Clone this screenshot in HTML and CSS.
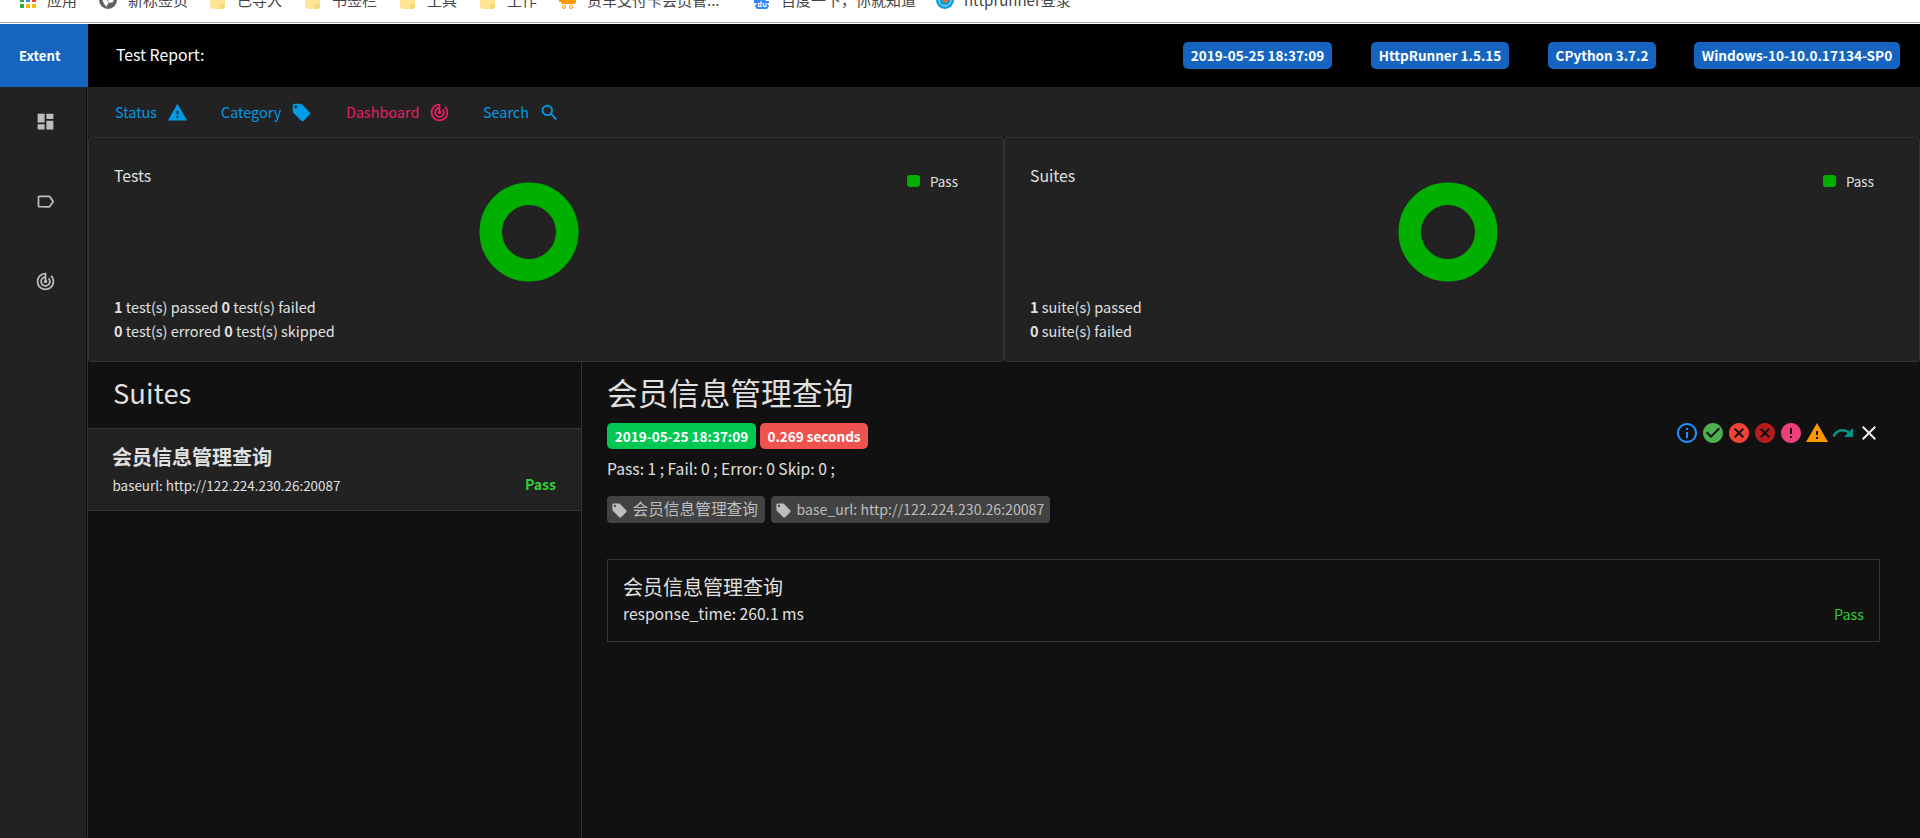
FILE: index.html
```
<!DOCTYPE html>
<html lang="zh-CN">
<head>
<meta charset="utf-8">
<title>Test Report</title>
<link rel="stylesheet" href="styles.css">
</head>
<body>
<svg class="defs" width="0" height="0">
  <symbol id="warning" viewBox="0 0 24 24"><path d="M1 21h22L12 2 1 21zm12-3h-2v-2h2v2zm0-4h-2v-4h2v4z"/></symbol>
  <symbol id="tag" viewBox="0 0 24 24"><path d="M21.41 11.58l-9-9C12.05 2.22 11.55 2 11 2H4c-1.1 0-2 .9-2 2v7c0 .55.22 1.05.59 1.42l9 9c.36.36.86.58 1.41.58.55 0 1.05-.22 1.41-.59l7-7c.37-.36.59-.86.59-1.41 0-.55-.23-1.06-.59-1.42zM5.500 7C4.670 7 4 6.330 4 5.500S4.670 4 5.500 4 7 4.670 7 5.500 6.330 7 5.500 7z"/></symbol>
  <symbol id="track" viewBox="0 0 24 24"><path d="M19.070 4.930l-1.410 1.410C19.100 7.790 20 9.790 20 12c0 4.420-3.580 8-8 8s-8-3.580-8-8c0-4.080 3.050-7.440 7-7.930v2.020C8.160 6.570 6 9.030 6 12c0 3.310 2.690 6 6 6s6-2.690 6-6c0-1.660-.67-3.160-1.760-4.240l-1.410 1.410C15.550 9.900 16 10.900 16 12c0 2.210-1.790 4-4 4s-4-1.790-4-4c0-1.860 1.280-3.410 3-3.860v2.140c-.6.35-1 .98-1 1.720 0 1.100.9 2 2 2s2-.9 2-2c0-.74-.4-1.380-1-1.720V2h-1C6.480 2 2 6.480 2 12s4.480 10 10 10 10-4.480 10-10c0-2.760-1.120-5.260-2.930-7.070z"/></symbol>
  <symbol id="search" viewBox="0 0 24 24"><path d="M15.500 14h-.79l-.28-.27C15.410 12.590 16 11.110 16 9.500 16 5.910 13.090 3 9.500 3S3 5.910 3 9.500 5.910 16 9.500 16c1.610 0 3.090-.59 4.230-1.570l.27.28v.79l5 4.990L20.490 19l-4.990-5zm-6 0C7.010 14 5 11.990 5 9.500S7.010 5 9.500 5 14 7.010 14 9.500 11.990 14 9.500 14z"/></symbol>
  <symbol id="dashboard" viewBox="0 0 24 24"><path d="M3 13h8V3H3v10zm0 8h8v-6H3v6zm10 0h8V11h-8v10zm0-18v6h8V3h-8z"/></symbol>
  <symbol id="label" viewBox="0 0 24 24"><path d="M17.630 5.840C17.270 5.330 16.670 5 16 5L5 5.010C3.900 5.010 3 5.900 3 7v10c0 1.100.9 1.990 2 1.990L16 19c.67 0 1.270-.33 1.630-.84L22 12l-4.370-6.160zM16 17H5V7h11l3.550 5L16 17z"/></symbol>
  <symbol id="info" viewBox="0 0 24 24"><path d="M11 17h2v-6h-2v6zm1-15C6.480 2 2 6.480 2 12s4.480 10 10 10 10-4.480 10-10S17.520 2 12 2zm0 18c-4.410 0-8-3.590-8-8s3.590-8 8-8 8 3.590 8 8-3.590 8-8 8zM11 9h2V7h-2v2z"/></symbol>
  <symbol id="check" viewBox="0 0 24 24"><path d="M12 2C6.480 2 2 6.480 2 12s4.480 10 10 10 10-4.480 10-10S17.520 2 12 2zm-2 15l-5-5 1.410-1.410L10 14.170l7.590-7.590L19 8l-9 9z"/></symbol>
  <symbol id="cancel" viewBox="0 0 24 24"><path d="M12 2C6.470 2 2 6.470 2 12s4.470 10 10 10 10-4.470 10-10S17.530 2 12 2zm5 13.590L15.590 17 12 13.410 8.410 17 7 15.590 10.590 12 7 8.410 8.410 7 12 10.590 15.590 7 17 8.410 13.410 12 17 15.590z"/></symbol>
  <symbol id="error" viewBox="0 0 24 24"><path d="M12 2C6.480 2 2 6.480 2 12s4.480 10 10 10 10-4.480 10-10S17.520 2 12 2zm1 15h-2v-2h2v2zm0-4h-2V7h2v6z"/></symbol>
  <symbol id="redo" viewBox="0 0 24 24"><path d="M18.400 10.600C16.550 8.990 14.150 8 11.500 8c-4.650 0-8.580 3.030-9.960 7.220L3.900 16c1.050-3.190 4.050-5.500 7.600-5.500 1.950 0 3.730.72 5.120 1.880L13 16h9V7l-3.600 3.600z"/></symbol>
  <symbol id="close" viewBox="0 0 24 24"><path d="M19 6.410L17.590 5 12 10.590 6.410 5 5 6.410 10.590 12 5 17.590 6.410 19 12 13.410 17.590 19 19 17.590 13.410 12z"/></symbol>
  <symbol id="folder" viewBox="0 0 18 10"><path d="M1 0h15v6l-1 3H3L1 7z" fill="#ffe694"/><path d="M11 4h5v3l-2 2h-3z" fill="#f8d775"/></symbol>
</svg>

<div class="bookmarks">
  <span class="bm bm-apps"><svg class="bm-icon" viewBox="0 0 18 18"><path fill="#2da94f" d="M1 0h4v2H1zM1 4h4v4H1z"/><path fill="#4285f4" d="M7 0h4v2H7z"/><path fill="#ea4335" d="M13 0h4v2h-4z"/><path fill="#fbbc05" d="M7 4h4v4H7zM13 4h4v4h-4z"/></svg>应用</span>
  <span class="bm bm-new"><svg class="bm-icon" viewBox="0 0 18 18"><circle cx="9" cy="0" r="9" fill="#5f6368"/><path d="M3-1l5 1 2 3-2 2v2L5 4zM10-2h5l-1 4-3 1-2-2z" fill="#fff"/></svg>新标签页</span>
  <span class="bm"><svg class="bm-icon bm-folder"><use href="#folder"/></svg>已导入</span>
  <span class="bm"><svg class="bm-icon bm-folder"><use href="#folder"/></svg>书签栏</span>
  <span class="bm"><svg class="bm-icon bm-folder"><use href="#folder"/></svg>工具</span>
  <span class="bm"><svg class="bm-icon bm-folder"><use href="#folder"/></svg>工作</span>
  <span class="bm"><svg class="bm-icon" viewBox="0 0 18 18"><path d="M0 0h17v3l-2 1H3L2 2H0z" fill="#f90"/><circle cx="5" cy="7" r="1.500" fill="none" stroke="#f90"/><circle cx="12" cy="7" r="1.500" fill="none" stroke="#f90"/></svg>货车支付卡会员管...</span>
  <span class="bm"><svg class="bm-icon" viewBox="0 0 18 18"><path d="M1 0h4l2-1h4l2 2h3v2h-2l2 3-2 3H4L2 6l2-3H1z" fill="#3385ff"/><path d="M8 1v5.500H5.500v-3H8M10.500 3v3.500H13V3" fill="none" stroke="#fff" stroke-width="1.200"/></svg>百度一下，你就知道</span>
  <span class="bm"><svg class="bm-icon" viewBox="0 0 18 18"><circle cx="9" cy="0" r="9" fill="#0d9ddb"/><circle cx="9" cy="0" r="6" fill="none" stroke="#bfe8f7"/><circle cx="9" cy="0" r="2.500" fill="#f26b21"/></svg>httprunner登录</span>
</div>

<div class="app">
  <header class="topbar">
    <div class="logo">Extent</div>
    <div class="report-name">Test Report:</div>
    <div class="env">
      <span class="badge env-date">2019-05-25 18:37:09</span>
      <span class="badge env-runner">HttpRunner 1.5.15</span>
      <span class="badge env-python">CPython 3.7.2</span>
      <span class="badge env-os">Windows-10-10.0.17134-SP0</span>
    </div>
  </header>
  <div class="body">
    <aside class="sidebar">
      <svg class="side-icon"><use href="#dashboard"/></svg>
      <svg class="side-icon"><use href="#label"/></svg>
      <svg class="side-icon"><use href="#track"/></svg>
    </aside>
    <main class="content">
      <nav class="filters">
        <a class="filter f-status"><span>Status</span><svg class="nav-icon"><use href="#warning"/></svg></a>
        <a class="filter f-category"><span>Category</span><svg class="nav-icon"><use href="#tag"/></svg></a>
        <a class="filter f-dashboard active"><span>Dashboard</span><svg class="nav-icon"><use href="#track"/></svg></a>
        <a class="filter f-search"><span>Search</span><svg class="nav-icon"><use href="#search"/></svg></a>
      </nav>
      <section class="charts">
        <div class="chart-card">
          <div class="chart-title">Tests</div>
          <svg class="donut donut-tests" viewBox="0 0 100 100"><circle cx="50" cy="50" r="38.250"/></svg>
          <div class="legend"><i></i>Pass</div>
          <div class="counts"><div><b>1</b> test(s) passed <b>0</b> test(s) failed</div><div><b>0</b> test(s) errored <b>0</b> test(s) skipped</div></div>
        </div>
        <div class="chart-card">
          <div class="chart-title">Suites</div>
          <svg class="donut donut-suites" viewBox="0 0 100 100"><circle cx="50" cy="50" r="38.250"/></svg>
          <div class="legend"><i></i>Pass</div>
          <div class="counts"><div><b>1</b> suite(s) passed</div><div><b>0</b> suite(s) failed</div></div>
        </div>
      </section>
      <section class="panes">
        <div class="suite-list">
          <h5 class="list-title">Suites</h5>
          <div class="suite">
            <div class="suite-name">会员信息管理查询</div>
            <div class="suite-row"><span class="suite-url">baseurl: http://122.224.230.26:20087</span><span class="suite-pass">Pass</span></div>
          </div>
        </div>
        <div class="detail">
          <h5 class="detail-title">会员信息管理查询</h5>
          <div class="detail-meta">
            <div class="badges"><span class="badge green">2019-05-25 18:37:09</span><span class="badge red">0.269 seconds</span></div>
            <div class="status-icons">
              <svg class="c-info"><use href="#info"/></svg>
              <svg class="c-pass"><use href="#check"/></svg>
              <svg class="c-fail"><use href="#cancel"/></svg>
              <svg class="c-fatal"><use href="#cancel"/></svg>
              <svg class="c-error"><use href="#error"/></svg>
              <svg class="c-warn"><use href="#warning"/></svg>
              <svg class="c-skip"><use href="#redo"/></svg>
              <svg class="c-clear"><use href="#close"/></svg>
            </div>
          </div>
          <div class="summary">Pass: 1 ; Fail: 0 ; Error: 0 Skip: 0 ;</div>
          <div class="tags">
            <span class="tag tag-name"><svg><use href="#tag"/></svg><span>会员信息管理查询</span></span>
            <span class="tag tag-url"><svg><use href="#tag"/></svg><span>base_url: http://122.224.230.26:20087</span></span>
          </div>
          <div class="test">
            <div class="test-name">会员信息管理查询</div>
            <div class="test-row"><span class="test-time">response_time: 260.1 ms</span><span class="test-pass">Pass</span></div>
          </div>
        </div>
      </section>
    </main>
  </div>
</div>
</body>
</html>
```
FILE: styles.css
```
* { box-sizing: border-box; }
body {
  margin: 0;
  height: 838px;
  overflow: hidden;
  background: #111;
  color: #e0e0e0;
  font-family: "Noto Sans CJK SC", "Noto Sans", sans-serif;
  font-size: 14.4px;
  white-space: nowrap;
}
svg { display: block; flex: none; fill: currentColor; }
.defs { position: absolute; }
h5 { margin: 0; font-weight: 400; }

/* browser bookmark strip */
.bookmarks {
  display: grid;
  grid-template-columns: 91px 99px 95px 95px 80px 80px 194px 183px 200px;
  height: 24px;
  padding-left: 19px;
  overflow: hidden;
  background: linear-gradient(#fff 22px, #aaa 22px, #aaa 23px, #fff 23px);
  color: #444;
  font-size: 15px;
  line-height: 20px;
}
.bm { display: flex; height: 20px; margin-top: -10px; }
.bm-icon { width: 18px; height: 18px; margin: 10px 10px 0 0; overflow: visible; }
.bm-folder { height: 10px; }
.bm-new .bm-icon { margin-left: -11px; margin-right: 11px; }

/* header */
.topbar { display: flex; height: 63px; background: #000; color: #fff; }
.logo {
  width: 88px;
  padding-left: 19px;
  background: #1565c0;
  font-size: 13.200px;
  font-weight: 700;
  line-height: 63px;
}
.report-name { padding-left: 28px; font-size: 15.800px; line-height: 62px; }
.env { display: flex; gap: 39px; margin: 18px 20px 0 auto; }
.badge {
  height: 27px;
  border-radius: 5px;
  background: #1565c0;
  color: #fff;
  font-size: 13.500px;
  font-weight: 700;
  line-height: 27px;
  text-align: center;
}
.env-date { width: 149px; }
.env-runner { width: 138px; }
.env-python { width: 108px; }
.env-os { width: 206px; margin-left: -1px; font-size: 13.600px; }

.body { display: flex; height: 751px; }
.sidebar {
  display: flex;
  flex-direction: column;
  gap: 59px;
  width: 88px;
  padding: 23.500px 0 0 34.500px;
  border-right: 1px solid #333;
  background: #222;
  box-shadow: inset -1px 0 #111;
  color: #bdbdbd;
}
.side-icon { width: 21px; height: 21px; }
.content { flex: 1; }

/* filter bar */
.filters {
  display: flex;
  height: 50px;
  padding-left: 27px;
  background: #222;
  color: #039be5;
}
.filter { display: flex; align-items: center; line-height: 50px; font-size: 14.400px; }
.f-status { width: 106px; }
.f-category { width: 125px; }
.f-dashboard { width: 137px; }
.nav-icon { width: 21px; height: 21px; margin-left: 10px; }
.active { color: #e91e63; }

/* chart cards */
.charts { display: grid; grid-template-columns: 1fr 1fr; background: #111; }
.chart-card {
  display: grid;
  grid-template: 118px 1fr / 340px 1fr 70px;
  height: 225px;
  padding: 24px 26px 0 25px;
  border: 1px solid #333;
  border-radius: 3px;
  background: #222;
}
.chart-title { font-size: 15.800px; line-height: 28px; }
.donut { width: 100px; height: 100px; margin: 20px 0 0 25px; }
.donut-suites { margin-left: 28px; }
.donut circle { fill: none; stroke: #00af00; stroke-width: 22.500; }
.legend { display: flex; align-items: center; height: 20px; margin-top: 9px; font-size: 13.400px; line-height: 18px; }
.legend i { width: 13px; height: 12px; margin-right: 10px; border-radius: 3px; background: #00af00; }
.counts { grid-column: 1 / -1; padding-top: 15px; font-size: 14.480px; line-height: 24px; }

/* lower panes */
.panes { display: flex; height: 476px; }
.suite-list { width: 494px; border-right: 1px solid #333; }
.list-title { height: 67px; padding-left: 25px; border-bottom: 1px solid #333; font-size: 27.400px; line-height: 61px; }
.suite { height: 82px; padding: 14px 25px 0 24px; border-bottom: 1px solid #333; background: #222; }
.suite-name { font-size: 20px; font-weight: 700; line-height: 28px; }
.suite-row { display: flex; justify-content: space-between; line-height: 28px; }
.suite-url { padding-left: 0.500px; font-size: 13.430px; line-height: 29px; }
.suite-pass { color: #32cd32; font-size: 14.100px; font-weight: 700; line-height: 26px; }

.detail { flex: 1; padding: 9px 40px 0 25px; }
.detail-title { height: 52px; font-size: 30.800px; line-height: 41px; }
.detail-meta { display: flex; justify-content: space-between; }
.badges { display: flex; gap: 4px; }
.badges .badge { height: 26px; line-height: 26px; }
.green { width: 149px; background: #00c853; }
.red { width: 108px; background: #ef5350; }
.status-icons { display: flex; gap: 2px; margin: -2px -1px 0 0; }
.status-icons svg { width: 24px; height: 24px; }
.c-info { color: #1e90ff; }
.c-pass { color: #4caf50; }
.c-fail { color: #f44336; }
.c-fatal { color: #b71c1c; }
.c-error { color: #ec407a; }
.c-warn { color: #ff9800; }
.c-skip { color: #009688; }
.c-clear { color: #eee; }
.summary { height: 47px; font-size: 15.660px; line-height: 40px; }
.tags { display: flex; gap: 6px; color: #bdbdbd; }
.tag { display: flex; align-items: center; height: 27px; padding-left: 3.500px; border-radius: 4px; background: #424242; line-height: 25px; }
.tag span { height: 27px; }
.tag svg { width: 17px; height: 17px; margin: 2px 5px 0 0; }
.tag-name { width: 158px; font-size: 15.700px; }
.tag-url { width: 279px; font-size: 14.130px; line-height: 27px; }
.test { height: 83px; margin-top: 36px; padding: 13px 15px; border: 1px solid #333; }
.test-name { font-size: 20px; line-height: 28px; }
.test-row { display: flex; justify-content: space-between; line-height: 26px; }
.test-time { font-size: 15.650px; }
.test-pass { line-height: 26px; color: #32cd32; }
```
